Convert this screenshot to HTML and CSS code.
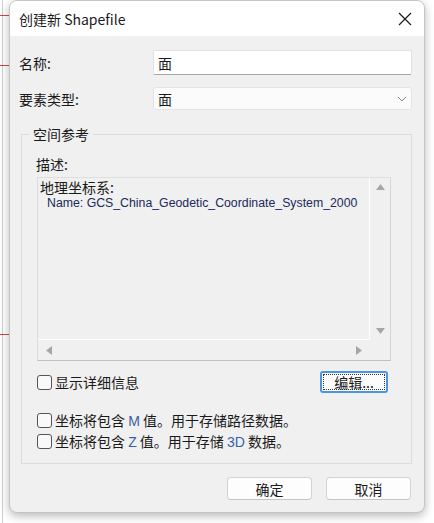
FILE: index.html
```html
<!DOCTYPE html>
<html lang="zh-CN">
<head>
<meta charset="utf-8">
<title>创建新 Shapefile</title>
<link rel="stylesheet" href="styles.css">
</head>
<body>
<div class="dialog">
  <div class="titlebar">
    <span class="title">创建新 Shapefile</span>
    <svg class="close" width="14" height="14" viewBox="0 0 14 14"><path d="M1 1 L13 13 M13 1 L1 13" stroke="#1a1a1a" stroke-width="1.2" fill="none"/></svg>
  </div>
  <div class="body">
    <div class="row">
      <span class="lbl">名称:</span>
      <div class="field input">面</div>
    </div>
    <div class="row row2">
      <span class="lbl">要素类型:</span>
      <div class="field select"><span>面</span><svg class="chev" width="10" height="6" viewBox="0 0 10 6"><path d="M1 1 L5 5 L9 1" stroke="#8a8a8a" stroke-width="1" fill="none"/></svg></div>
    </div>
    <fieldset class="group">
      <legend>空间参考</legend>
      <div class="desc-label">描述:</div>
      <div class="descbox">
        <div class="desc-content">
          <div class="geo">地理坐标系:</div>
          <div class="name">Name: GCS_China_Geodetic_Coordinate_System_2000</div>
        </div>
        <div class="vscroll">
          <svg width="9" height="6" viewBox="0 0 9 6"><path d="M4.5 0 L9 6 L0 6 Z" fill="#a6a6a6"/></svg>
          <svg width="9" height="6" viewBox="0 0 9 6"><path d="M0 0 L9 0 L4.5 6 Z" fill="#a6a6a6"/></svg>
        </div>
        <div class="hscroll">
          <svg width="6" height="9" viewBox="0 0 6 9"><path d="M0 4.5 L6 0 L6 9 Z" fill="#a6a6a6"/></svg>
          <svg width="6" height="9" viewBox="0 0 6 9"><path d="M6 4.5 L0 0 L0 9 Z" fill="#a6a6a6"/></svg>
        </div>
        <div class="corner"></div>
      </div>
      <div class="detail-row">
        <label class="check"><span class="box"></span><span>显示详细信息</span></label>
        <button class="edit"><span class="focus">编辑...</span></button>
      </div>
      <label class="check opt first"><span class="box"></span><span>坐标将包含 <span class="lat">M</span> 值。用于存储路径数据。</span></label>
      <label class="check opt"><span class="box"></span><span>坐标将包含 <span class="lat">Z</span> 值。用于存储 <span class="lat">3D</span> 数据。</span></label>
    </fieldset>
    <div class="actions">
      <button class="btn">确定</button>
      <button class="btn">取消</button>
    </div>
  </div>
</div>
</body>
</html>
```

FILE: styles.css
```css
html, body {
  margin: 0;
  padding: 0;
}
body {
  width: 434px;
  height: 523px;
  overflow: hidden;
  font-family: "Noto Sans CJK SC", "Noto Sans", sans-serif;
  color: #1a1a1a;
  background-color: #ffffff;
  background-image:
    linear-gradient(#c8484f, #c8484f),
    linear-gradient(#c8484f, #c8484f),
    linear-gradient(#c8484f, #c8484f),
    linear-gradient(#cfcfcf, #cfcfcf);
  background-size: 9px 1px, 9px 1px, 9px 1px, 1px 100%;
  background-position: 0 15px, 0 65px, 0 334px, 2px 0;
  background-repeat: no-repeat;
  padding-left: 9px;
  box-sizing: border-box;
}
.dialog {
  width: 416px;
  height: 513px;
  box-sizing: border-box;
  border: 1px solid #c4c4c4;
  border-radius: 8px;
  background: #f0f0f0;
  box-shadow: 0 3px 10px rgba(0, 0, 0, 0.28);
  overflow: hidden;
  display: flex;
  flex-direction: column;
}
.titlebar {
  height: 35px;
  background: #ffffff;
  display: flex;
  align-items: center;
  justify-content: space-between;
  padding: 0 12px 0 9px;
  flex: none;
}
.title {
  font-size: 14px;
  line-height: 20px;
  color: #1a1a1a;
}
.close {
  display: block;
}
.body {
  padding: 14px 12px 0 9px;
  display: flex;
  flex-direction: column;
}
.row {
  display: flex;
  align-items: center;
  justify-content: space-between;
}
.row2 {
  margin-top: 12px;
}
.lbl {
  font-size: 14px;
  line-height: 20px;
}
.field {
  width: 259px;
  box-sizing: border-box;
  font-size: 14px;
  line-height: 20px;
  padding-left: 4px;
  display: flex;
  align-items: center;
}
.input {
  height: 25px;
  background: #ffffff;
  border: 1px solid #e2e2e2;
  border-bottom: 1px solid #a8a8a8;
  border-radius: 2px;
}
.select {
  height: 23px;
  background: #fbfbfb;
  border: 1px solid #e4e4e4;
  border-radius: 3px;
  justify-content: space-between;
  padding-right: 4px;
}
.chev {
  display: block;
}
.group {
  margin: 14px 0 0 2px;
  border: 1px solid #dcdcdc;
  padding: 10px 20px 11px 15px;
  min-width: 0;
}
.group legend {
  font-size: 14px;
  line-height: 20px;
  margin-left: -8px;
  padding: 0 4px;
}
.desc-label {
  font-size: 14px;
  line-height: 20px;
  margin-left: -1px;
}
.descbox {
  margin-top: 3px;
  height: 184px;
  box-sizing: border-box;
  border: 1px solid #dedede;
  border-bottom-color: #c2c2c2;
  border-right-color: #d4d4d4;
  display: grid;
  grid-template-columns: 1fr 20px;
  grid-template-rows: 1fr 20px;
}
.desc-content {
  border-right: 1px solid #ffffff;
  border-bottom: 1px solid #ffffff;
  padding: 1px 0 0 2px;
  overflow: hidden;
}
.geo {
  font-size: 14px;
  line-height: 16px;
  color: #1a1a1a;
}
.name {
  font-family: "Liberation Sans", Arial, sans-serif;
  font-size: 12.3px;
  line-height: 16px;
  padding-left: 7px;
  color: #20295a;
  white-space: nowrap;
}
.vscroll {
  display: flex;
  flex-direction: column;
  justify-content: space-between;
  align-items: center;
  padding: 6px 0 6px 1px;
}
.vscroll svg, .hscroll svg {
  display: block;
}
.hscroll {
  display: flex;
  justify-content: space-between;
  align-items: center;
  padding: 0 8px 0 8px;
}
.detail-row {
  margin-top: 10px;
  height: 22px;
  display: flex;
  align-items: center;
  justify-content: space-between;
}
.check {
  display: flex;
  align-items: center;
  font-size: 14px;
  line-height: 20px;
  white-space: nowrap;
}
.box {
  width: 15px;
  height: 15px;
  box-sizing: border-box;
  border: 1px solid #555555;
  border-radius: 3px;
  background: #f9f9f9;
  margin-right: 3px;
  flex: none;
}
.edit {
  width: 68px;
  height: 22px;
  margin-right: 3px;
  box-sizing: border-box;
  border: 2px solid #4b95e3;
  border-radius: 3px;
  background: #fcfcfc;
  padding: 1px;
  font-family: inherit;
  font-size: 14px;
  color: #1a1a1a;
  display: flex;
}
.focus {
  flex: 1;
  border: 1px dotted #333333;
  line-height: 14px;
  display: flex;
  align-items: center;
  justify-content: center;
}
.opt.first {
  margin-top: 17px;
}
.lat {
  font-family: "Liberation Sans", Arial, sans-serif;
  color: #3a5ea8;
}
.actions {
  margin-top: 13px;
  display: flex;
  justify-content: flex-end;
  gap: 14px;
  padding-right: 1px;
}
.btn {
  width: 85px;
  height: 23px;
  box-sizing: border-box;
  border: 1px solid #d3d3d3;
  border-bottom-color: #c4c4c4;
  border-radius: 4px;
  background: #fdfdfd;
  font-family: inherit;
  font-size: 14px;
  line-height: 20px;
  color: #1a1a1a;
  padding: 0;
}
```
